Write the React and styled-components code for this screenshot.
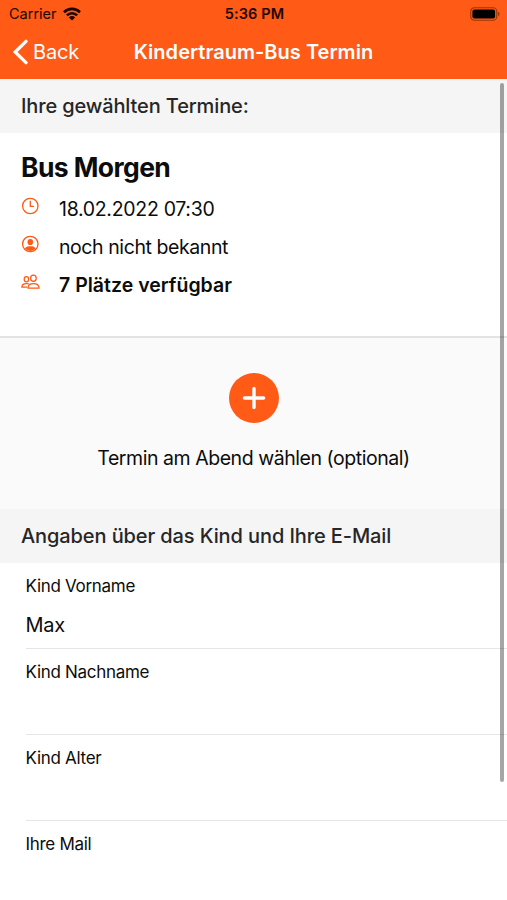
import React from 'react';
import styled, { createGlobalStyle } from 'styled-components';

const ORANGE = '#ff5a16';

const GlobalStyle = createGlobalStyle`
  * { box-sizing: border-box; }
  html, body { margin: 0; padding: 0; background: #fff; }
  body { overflow: hidden; font-family: Inter, "Liberation Sans", sans-serif; color: #0c0c0c; }
`;

const Screen = styled.div`
  position: relative;
  display: flex;
  flex-direction: column;
  width: 507px;
  height: 900px;
  overflow: hidden;
  background: #fff;
`;

const Text = styled.span`
  display: block;
  white-space: nowrap;
  font-size: ${(p) => p.$size}px;
  font-weight: ${(p) => p.$weight || 400};
  letter-spacing: ${(p) => p.$track || 0}px;
  line-height: ${(p) => p.$line || 24}px;
  color: ${(p) => p.$color || 'inherit'};
`;

const TopBar = styled.header`
  flex: none;
  height: 79px;
  background: ${ORANGE};
`;

const Row = styled.div`
  display: grid;
  grid-template-columns: 1fr auto 1fr;
  align-items: center;
`;

const StatusBar = styled(Row)`
  height: 27px;
  padding: 0 7px 0 9px;
  color: #1c0800;
`;

const NavBar = styled(Row)`
  height: 50px;
  padding: 0 12px;
  color: #fff;
`;

const Carrier = styled.div`
  display: flex;
  align-items: center;
  gap: 6px;
`;

const BatterySlot = styled.div`
  display: flex;
  justify-content: flex-end;
`;

const BackButton = styled.button`
  display: flex;
  align-items: center;
  gap: 5px;
  padding: 0;
  border: 0;
  background: none;
  color: inherit;
  font-family: inherit;
`;

const SectionHeader = styled.h2`
  flex: none;
  display: flex;
  align-items: center;
  height: ${(p) => p.$height}px;
  margin: 0;
  padding-left: 21px;
  background: #f5f5f5;
  color: #262626;
`;

const Appointment = styled.section`
  flex: none;
  height: 205px;
  padding: 18px 21px 0;
  border-bottom: 2px solid #e3e3e3;
`;

const Details = styled.ul`
  list-style: none;
  margin: 7px 0 0;
  padding: 0;
`;

const Detail = styled.li`
  display: grid;
  grid-template-columns: 38px 1fr;
  height: 38px;
  align-items: center;

  svg { display: block; margin-top: -6px; color: ${ORANGE}; }
`;

const AddSection = styled.section`
  flex: none;
  display: flex;
  flex-direction: column;
  align-items: center;
  height: 171px;
  padding-top: 35px;
  background: #fafafa;
`;

const AddButton = styled.button`
  display: grid;
  place-items: center;
  width: 50px;
  height: 50px;
  margin-bottom: 23px;
  padding: 0;
  border: 0;
  border-radius: 50%;
  background: ${ORANGE};
  color: #fff;
`;

const Form = styled.div`
  padding-left: 25.5px;
`;

const Field = styled.label`
  display: block;
  height: 86px;
  padding-top: 11px;
  border-bottom: 1px solid ${(p) => (p.$last ? 'transparent' : '#e6e6e6')};
`;

const Value = styled.div`
  height: 24px;
  margin-top: 15px;
`;

const ScrollThumb = styled.div`
  position: absolute;
  top: 83px;
  right: 3px;
  width: 4px;
  height: 699px;
  border-radius: 2px;
  background: rgba(0, 0, 0, 0.35);
`;

const WifiIcon = () => (
  <svg width="18" height="14" viewBox="0 0 18 14" fill="none" stroke="currentColor" strokeWidth="2.6">
    <path d="M1 5.2a11.4 11.4 0 0 1 16 0" />
    <path d="M3.9 8.4a7.2 7.2 0 0 1 10.2 0" />
    <path d="M9 13.5L5.9 10.4a4.4 4.4 0 0 1 6.2 0z" fill="currentColor" stroke="none" />
  </svg>
);

const BatteryIcon = () => (
  <svg width="30" height="14" viewBox="0 0 30 14">
    <rect x="0.75" y="0.75" width="26" height="12.5" rx="3.6" fill="none" stroke="#a03608" strokeWidth="1.2" />
    <rect x="2.4" y="2.4" width="22.7" height="9.2" rx="2" fill="#000" />
    <path d="M28 4.8q1.6.6 1.6 2.2T28 9.2z" fill="#a03608" />
  </svg>
);

const ChevronIcon = () => (
  <svg width="16" height="26" viewBox="0 0 16 26" fill="none" stroke="currentColor" strokeWidth="3.3">
    <path d="M14 2.3L3.2 13 14 23.7" strokeLinecap="round" />
  </svg>
);

const ClockIcon = () => (
  <svg width="19" height="18" viewBox="0 0 19 18" fill="none" stroke="currentColor" strokeWidth="1.3">
    <circle cx="9.3" cy="9" r="7.7" />
    <path d="M9.3 3.8V9.3H13" />
  </svg>
);

const PersonIcon = () => (
  <svg width="19" height="18" viewBox="0 0 19 18" fill="currentColor">
    <circle cx="9.3" cy="9" r="7.7" fill="none" stroke="currentColor" strokeWidth="1.3" />
    <ellipse cx="9.3" cy="7" rx="2.8" ry="3.1" />
    <path d="M3.9 13.6c.9-1.8 2.8-2.3 5.4-2.3s4.5.5 5.4 2.3a7.4 7.4 0 0 1-10.8 0z" />
  </svg>
);

const PeopleIcon = () => (
  <svg width="19" height="16" viewBox="0 0 19 16" fill="none" stroke="currentColor" strokeWidth="1.25">
    <ellipse cx="12.4" cy="4.2" rx="2.8" ry="3.1" />
    <path d="M7 14.2c0-3.2 2-4.6 5.4-4.6s5.7 1.4 5.7 4.6z" strokeLinejoin="round" />
    <ellipse cx="5.4" cy="5.2" rx="2.2" ry="2.6" />
    <path d="M6.2 13.2H.8c0-2.5 1.6-3.7 4.5-3.7 1 0 1.8.1 2.5.4" strokeLinejoin="round" />
  </svg>
);

const PlusIcon = () => (
  <svg width="24" height="24" viewBox="0 0 24 24" fill="none" stroke="currentColor" strokeWidth="3.4" strokeLinecap="round">
    <path d="M12 2.4v19.2M2.4 12h19.2" />
  </svg>
);

const details = [
  { Icon: ClockIcon, text: '18.02.2022 07:30', track: -0.3 },
  { Icon: PersonIcon, text: 'noch nicht bekannt', track: -0.42 },
  { Icon: PeopleIcon, text: '7 Plätze verfügbar', track: 0.01, weight: 600 },
];

const fields = [
  { label: 'Kind Vorname', value: 'Max' },
  { label: 'Kind Nachname', value: '' },
  { label: 'Kind Alter', value: '' },
  { label: 'Ihre Mail', value: '' },
];

export default function App() {
  return (
    <Screen>
      <GlobalStyle />
      <TopBar>
        <StatusBar>
          <Carrier>
            <Text $size={14.5} $line={20}>Carrier</Text>
            <WifiIcon />
          </Carrier>
          <Text $size={14.5} $weight={600} $line={20} $track={0.15}>5:36 PM</Text>
          <BatterySlot><BatteryIcon /></BatterySlot>
        </StatusBar>
        <NavBar>
          <BackButton>
            <ChevronIcon />
            <Text $size={20} $track={-0.2}>Back</Text>
          </BackButton>
          <Text $size={20} $weight={600} $track={0.03}>Kindertraum-Bus Termin</Text>
        </NavBar>
      </TopBar>
      <SectionHeader $height={54}>
        <Text $size={20} $weight={500} $track={-0.13}>Ihre gewählten Termine:</Text>
      </SectionHeader>
      <Appointment>
        <Text $size={26.5} $weight={700} $line={32} $track={-0.6}>Bus Morgen</Text>
        <Details>
          {details.map(({ Icon, text, track, weight }) => (
            <Detail key={text}>
              <Icon />
              <Text $size={19.5} $weight={weight} $track={track}>{text}</Text>
            </Detail>
          ))}
        </Details>
      </Appointment>
      <AddSection>
        <AddButton aria-label="Termin am Abend wählen"><PlusIcon /></AddButton>
        <Text $size={19.5} $track={-0.45}>Termin am Abend wählen (optional)</Text>
      </AddSection>
      <SectionHeader $height={54}>
        <Text $size={20} $weight={500} $track={-0.1}>Angaben über das Kind und Ihre E-Mail</Text>
      </SectionHeader>
      <Form>
        {fields.map(({ label, value }, i) => (
          <Field key={label} $last={i === fields.length - 1}>
            <Text $size={17} $track={-0.3}>{label}</Text>
            <Value><Text $size={20} $track={-0.3}>{value}</Text></Value>
          </Field>
        ))}
      </Form>
      <ScrollThumb />
    </Screen>
  );
}
